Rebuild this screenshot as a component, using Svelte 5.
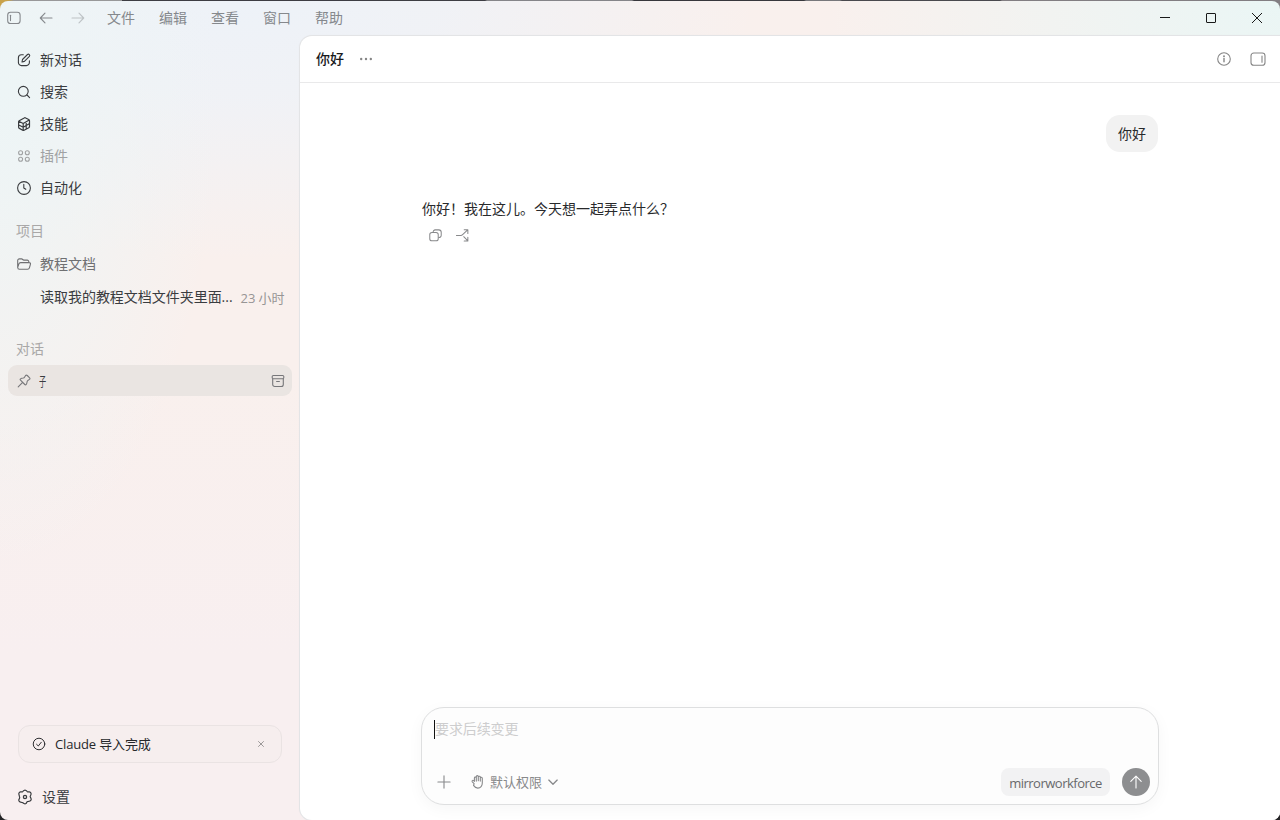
<script>
  const menus = ['文件', '编辑', '查看', '窗口', '帮助'];
  const nav = [
    { icon: 'edit', label: '新对话' },
    { icon: 'search', label: '搜索' },
    { icon: 'cube', label: '技能' },
    { icon: 'grid', label: '插件', muted: true },
    { icon: 'clock', label: '自动化' }
  ];
</script>

{#snippet icon(name, size = 16)}
  <svg width={size} height={size} viewBox="0 0 16 16" fill="none" stroke="currentColor" stroke-width="1.1" stroke-linecap="round" stroke-linejoin="round">
    {#if name === 'panel'}
      <rect x="1.7" y="2.3" width="12.4" height="11.2" rx="2.8" /><path d="M4.5 5.2v5.4" />
    {:else if name === 'panelRight'}
      <rect x="1" y="2" width="14" height="12.2" rx="2.8" /><path d="M12 5v6.2" />
    {:else if name === 'back'}
      <path d="M14 8H2.500M7 3.200 2.300 8 7 12.800" />
    {:else if name === 'forward'}
      <path d="M2 8h11.500M9 3.200 13.700 8 9 12.800" />
    {:else if name === 'edit'}
      <path d="M7.300 2.700H5.400a3 3 0 0 0-3 3v4.900a3 3 0 0 0 3 3h5a3 3 0 0 0 3-3V8.800M6 10l.5-2.500 5-5a1.350 1.350 0 0 1 1.900 1.900l-5 5z" />
    {:else if name === 'search'}
      <circle cx="7.300" cy="7.300" r="4.900" /><path d="m11 11 2.600 2.600" />
    {:else if name === 'cube'}
      <path d="M2.600 5.700c0-.5.200-.8.600-1l5-2.800c.5-.3 1-.3 1.500 0l3 1.700c.5.300.8.700.8 1.200v5.700c0 .5-.3.900-.7 1.200l-4.700 2.500c-.5.300-.9.300-1.400 0l-3.300-1.800c-.5-.3-.8-.7-.8-1.200zM2.800 5.200l4.400 2.300 6-3.600M7.200 7.600v6.600M2.800 9l4.400 2.200 6-3.500M10.200 5.800v6.500" stroke-width="1.200" />
    {:else if name === 'grid'}
      <circle cx="4.600" cy="4.800" r="2" /><circle cx="11.300" cy="4.800" r="2" /><circle cx="4.600" cy="11.200" r="2" /><circle cx="11.300" cy="11.200" r="2" />
    {:else if name === 'clock'}
      <circle cx="8" cy="8" r="6.400" /><path d="M7.800 4.400V8l2 1.300" />
    {:else if name === 'folder'}
      <path d="M1.700 11.600V4.500a1.600 1.600 0 0 1 1.600-1.600h2.300c1 0 1.200 1.200 2.200 1.200h3.400a1.600 1.600 0 0 1 1.600 1.600v.8M1.700 11.400l1.200-3.600a1.800 1.800 0 0 1 1.700-1.200h8.600a1.300 1.300 0 0 1 1.200 1.800l-1 3.400a2 2 0 0 1-1.800 1.400H3.500a1.800 1.800 0 0 1-1.800-1.800z" />
    {:else if name === 'pin'}
      <path d="M9.600 2.500c.6-.6 1.100-.5 1.700 0l2.300 2.300c.6.600.5 1.100-.1 1.600l-1.700 1.100c-.5.300-.6.700-.7 1.300-.1 1.300-.4 2.200-1 2.800-.5.500-.9.300-1.300-.1L4.500 7.200c-.5-.5-.5-.9 0-1.300.7-.5 1.500-.8 2.800-.9.6-.1.900-.2 1.200-.7zM6.400 9.600l-4.200 4.200" />
    {:else if name === 'archive'}
      <path d="M2.700 6v5.500a2 2 0 0 0 2 2h6.600a2 2 0 0 0 2-2V6M6.600 8.500h2.800" /><rect x="2.200" y="2.500" width="11.600" height="3.200" rx="1.100" />
    {:else if name === 'check'}
      <circle cx="8" cy="8" r="6.600" /><path d="m5.200 8.300 2 2L10.600 6" />
    {:else if name === 'close'}
      <path d="m3 3 10 10M13 3 3 13" stroke-width="1.600" />
    {:else if name === 'gear'}
      <path d="M7 1.400a2 2 0 0 1 2 0l1.100 1c.4.300.8.400 1.300.4l1 .1c.7.100 1.200.5 1.500 1.100.3.700.3 1.200 0 1.700l-.5 1c-.3.500-.3 1.100 0 1.600l.6 1.100c.3.700.3 1.200 0 1.700-.3.700-.8 1-1.500 1.100l-1.100.1c-.5 0-.9.100-1.300.4L9 14.600a2 2 0 0 1-2 0l-1.100-.9c-.4-.3-.8-.4-1.300-.4l-1-.1a2 2 0 0 1-1.600-1.100c-.3-.600-.3-1.200 0-1.700l.5-1.100c.3-.5.3-1 0-1.600L2 5.700a2 2 0 0 1 0-1.700c.3-.600.800-1 1.500-1.100l1.100-.1c.5 0 .9-.1 1.300-.4z" stroke-width="1.200" /><circle cx="8" cy="8" r="1.600" stroke-width="1.300" />
    {:else if name === 'info'}
      <circle cx="8" cy="8" r="6.300" /><path d="M8 7.500v3.200" stroke-width="1.400" /><circle cx="8" cy="5.200" r=".4" fill="currentColor" />
    {:else if name === 'copy'}
      <path d="M5.500 4.500a2.200 2.200 0 0 1 2.200-2.500h3.800a2.600 2.600 0 0 1 2.600 2.600v3.200a2.200 2.200 0 0 1-2.800 2.200" /><rect x="1.900" y="4.700" width="9" height="9" rx="2.300" />
    {:else if name === 'split'}
      <path d="M1.500 8h4.600c1.100 0 1.600-.4 2.300-1.100L13.500 2.100M9.800 1.900h3.900v3.900M9.300 9.300l4.400 4.500M13.700 9.800v4.100H9.800" />
    {:else if name === 'plus'}
      <path d="M8 1.900v12.200M1.900 8h12.200" />
    {:else if name === 'hand'}
      <path d="M4.100 9.700 2.300 7.800c-.8-.9.5-2 1.300-1.200l.8.700V3.900c0-1.200 1.900-1.200 1.900 0V2.600c0-1.300 2-1.300 2 0v.5c0-1.200 2-1.200 2 0v1c0-1.200 2-1.100 2 .1v4.900c0 3-1.700 5-4.500 5-2 0-3.200-1-4.300-2.700zM6.300 3.800v3.300M8.300 3.200v3.600M10.300 4.100v3" />
    {:else if name === 'chevron'}
      <path d="m3.200 5.800 4.800 4.700 4.800-4.700" stroke-width="1.500" />
    {:else if name === 'up'}
      <path d="M8 14V2.300M2.800 7.300 8 2.200l5.200 5.100" />
    {:else if name === 'dots'}
      <g fill="currentColor" stroke="none"><circle cx="2.500" cy="8" r="1.350" /><circle cx="8" cy="8" r="1.350" /><circle cx="13.500" cy="8" r="1.350" /></g>
    {/if}
  </svg>
{/snippet}

<div class="desktop">
  <div class="window">
    <header class="titlebar">
      <div class="tools">
        <span>{@render icon('panel')}</span>
        <span>{@render icon('back')}</span>
        <span class="off">{@render icon('forward')}</span>
      </div>
      <nav class="menus">
        {#each menus as m}<span>{m}</span>{/each}
      </nav>
      <div class="controls">
        <svg width="46" height="34" viewBox="0 0 46 34"><path d="M18 16.500h10" /></svg>
        <svg width="46" height="34" viewBox="0 0 46 34"><rect x="18.500" y="12.500" width="9" height="9" rx=".5" /></svg>
        <svg width="46" height="34" viewBox="0 0 46 34"><path d="m18 12 10 10M28 12 18 22" /></svg>
      </div>
    </header>

    <div class="body">
      <aside>
        {#each nav as item}
          <div class="row" class:muted={item.muted}>{@render icon(item.icon)}<span>{item.label}</span></div>
        {/each}
        <h2 class="projects">项目</h2>
        <div class="row folder">{@render icon('folder')}<span>教程文档</span></div>
        <div class="row thread"><span class="name">读取我的教程文档文件夹里面...</span><time>23 小时</time></div>
        <h2 class="chats">对话</h2>
        <div class="row selected">
          {@render icon('pin')}
          <span class="narrow">子</span>
          <span class="archive">{@render icon('archive')}</span>
        </div>
        <div class="spacer"></div>
        <div class="notice">{@render icon('check', 14)}<span>Claude 导入完成</span><i>{@render icon('close', 8)}</i></div>
        <div class="settings">{@render icon('gear')}<span>设置</span></div>
      </aside>

      <main>
        <div class="head">
          <h1>你好</h1>
          <span class="more">{@render icon('dots', 14)}</span>
          <div class="actions">{@render icon('info')}{@render icon('panelRight')}</div>
        </div>
        <div class="chat">
          <div class="bubble">你好</div>
          <p>你好！我在这儿。今天想一起弄点什么？</p>
          <div class="replytools">{@render icon('copy', 15)}{@render icon('split', 15)}</div>
          <div class="spacer"></div>
          <div class="composer">
            <div class="input"><span class="caret"></span><span>要求后续变更</span></div>
            <div class="bar">
              <span class="plus">{@render icon('plus')}</span>
              <span class="perm">{@render icon('hand')}<span>默认权限</span>{@render icon('chevron', 14)}</span>
              <span class="model">mirrorworkforce</span>
              <span class="send">{@render icon('up')}</span>
            </div>
          </div>
        </div>
      </main>
    </div>
  </div>
</div>

<style>
  :global(body) { overflow: hidden; }
  .desktop {
    width: 1280px; height: 820px; box-sizing: border-box; padding-top: 1px;
    background:
      linear-gradient(90deg, #c9a24a 0 8px, #989899 14px 122px, #3d3d43 122px 485px, #858589 487px 632px, #37373c 634px 804px, #77777b 806px 840px, #49494e 842px 1000px, #827e82 1002px) top / 100% 9px no-repeat,
      #242426;
    font-family: "Open Sans", "Noto Sans CJK SC", sans-serif;
    font-size: 14px; color: #3a3c3f;
  }
  svg { flex: none; display: block; }
  .window {
    height: 819px; display: flex; flex-direction: column; border-radius: 8px; overflow: hidden;
    background:
      radial-gradient(ellipse 220px 480px at 0 90px, #edf5f6 0, #edf5f6b0 35%, #f1f4f400 100%),
      radial-gradient(ellipse 520px 270px at 240px -10px, #edf2f8 0, #eff2f7e0 40%, #f3f3f300 100%),
      radial-gradient(ellipse 460px 300px at 1280px 0, #eaf6f5 0, #f0f4f300 100%),
      linear-gradient(180deg, #f9f0ed 0, #f9f0ed 45%, #f8eff0 80%);
  }
  .titlebar { height: 35px; flex: none; display: flex; align-items: center; color: #85888c; box-sizing: border-box; padding-bottom: 1px; }
  .tools { display: flex; gap: 16px; padding-left: 6px; }
  .tools .off { opacity: .45; }
  .menus { display: flex; gap: 24px; padding-left: 21px; line-height: 20px; }
  .controls { margin-left: auto; display: flex; height: 34px; }
  .controls svg { stroke: #191919; fill: none; stroke-width: 1; }
  .body { flex: 1; min-height: 0; display: flex; }
  aside { width: 300px; box-sizing: border-box; padding: 8px 8px 7px; display: flex; flex-direction: column; }
  .row { height: 32px; flex: none; display: flex; align-items: center; gap: 8px; padding: 0 8px; box-sizing: border-box; line-height: 20px; }
  .muted { color: #a0a2a3; }
  h2 { margin: 0; padding-left: 8px; font-size: 14px; font-weight: 400; line-height: 20px; color: #a9a8a8; }
  .projects { margin: 17px 0 7px; }
  .folder { color: #6f7072; }
  .thread { padding-left: 32px; margin-top: 1px; }
  .thread .name { white-space: nowrap; letter-spacing: -.03px; }
  .thread time { margin-left: auto; font-size: 13px; letter-spacing: -.1px; line-height: 22px; padding-top: 1px; color: #979595; white-space: nowrap; }
  .chats { margin: 26px 0 6px; }
  .selected { height: 31px; border-radius: 9px; background: #eae5e2; color: #77777a; gap: 7px; }
  .narrow { width: 14px; font-size: 13px; transform: scaleX(.55); transform-origin: left center; color: #3a3c3f; }
  .archive { margin-left: auto; margin-right: -2px; }
  .spacer { flex: 1; }
  .notice {
    height: 38px; box-sizing: border-box; margin: 0 10px; border: 1px solid #eae3e3; border-radius: 12px; background: #f6eeee;
    display: flex; align-items: center; gap: 9px; padding: 0 16px 0 13px; font-size: 13px; line-height: 18px; letter-spacing: -.15px; color: #26282b;
  }
  .notice i { margin-left: auto; color: #858383; }
  .settings { height: 32px; margin-top: 18px; padding-left: 9px; display: flex; align-items: center; gap: 9px; line-height: 20px; }
  main {
    flex: 1; min-width: 0; display: flex; flex-direction: column; background: #fff;
    border-radius: 12px 0 0 12px; box-shadow: 0 0 0 1px #e3e4e6, 0 0 3px #0000000d;
  }
  .head { height: 47px; box-sizing: border-box; flex: none; border-bottom: 1px solid #e9e9ea; display: flex; align-items: center; padding: 0 14px 0 16px; }
  h1 { margin: 0; font-size: 14px; line-height: 22px; font-weight: 500; color: #18191b; }
  .more { margin-left: 15px; color: #858585; }
  .actions { margin-left: auto; display: flex; gap: 18px; color: #858585; }
  .chat { flex: 1; width: 738px; margin: 0 auto; padding: 32px 0 15px; box-sizing: border-box; display: flex; flex-direction: column; }
  .bubble { align-self: flex-end; height: 37px; box-sizing: border-box; padding: 8px 12px; line-height: 21px; border-radius: 14px; background: #f2f2f2; margin-right: 1px; color: #28292b; }
  p { margin: 46px 0 0 1px; line-height: 22px; color: #28292b; }
  .replytools { display: flex; gap: 12px; margin: 8px 0 0 7px; color: #88898b; }
  .composer { height: 98px; box-sizing: border-box; border: 1px solid #dedfe0; border-radius: 23px; background: #fdfdfd; box-shadow: 0 4px 16px #0000000a; display: flex; flex-direction: column; }
  .input { display: flex; align-items: center; height: 20px; padding: 11px 12px 0; color: #cdcdce; line-height: 20px; letter-spacing: -.1px; }
  .caret { width: 1px; height: 19px; background: #111; }
  .bar { margin-top: auto; display: flex; align-items: center; padding: 0 8px 8px 14px; color: #88898b; height: 28px; }
  .perm { display: flex; align-items: center; margin-left: 18px; gap: 4px; font-size: 13px; line-height: 18px; }
  .model { margin-left: auto; width: 109px; text-align: center; height: 28px; line-height: 30px; box-sizing: border-box; border-radius: 8px; background: #f2f2f3; color: #68696b; font-size: 13px; letter-spacing: -.5px; }
  .send { width: 28px; height: 28px; border-radius: 50%; background: #8d8e90; color: #fff; display: grid; place-items: center; margin-left: 12px; }
</style>
